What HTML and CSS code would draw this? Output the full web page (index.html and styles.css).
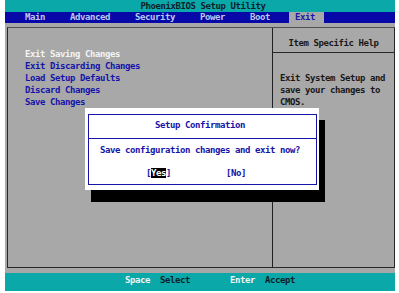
FILE: index.html
```html
<!DOCTYPE html>
<html>
<head>
<meta charset="utf-8">
<link rel="stylesheet" href="styles.css">
</head>
<body>
<div class="screen">
  <div class="titlebar">PhoenixBIOS Setup Utility</div>
  <nav class="menubar">
    <span class="item">Main</span>
    <span class="item">Advanced</span>
    <span class="item">Security</span>
    <span class="item">Power</span>
    <span class="item">Boot</span>
    <span class="item active">Exit</span>
  </nav>
  <div class="main">
    <div class="frame">
      <div class="options">
        <div class="opt sel">Exit Saving Changes</div>
        <div class="opt">Exit Discarding Changes</div>
        <div class="opt">Load Setup Defaults</div>
        <div class="opt">Discard Changes</div>
        <div class="opt">Save Changes</div>
      </div>
      <div class="help">
        <div class="help-title">Item Specific Help</div>
        <div class="help-body">Exit System Setup and<br>save your changes to<br>CMOS.</div>
      </div>
    </div>
  </div>
  <div class="footer">
    <span class="key">Space</span><span class="act">Select</span>
    <span class="key key2">Enter</span><span class="act">Accept</span>
  </div>
  <div class="dialog">
    <div class="dialog-inner">
      <div class="dlg-title">Setup Confirmation</div>
      <div class="dlg-msg">Save configuration changes and exit now?</div>
      <div class="dlg-btns"><span>[<span class="hl">Yes</span>]</span><span>[No]</span></div>
    </div>
  </div>
</div>
</body>
</html>
```

FILE: styles.css
```css
html, body {
  margin: 0;
  padding: 0;
  background: #ffffff;
}
.screen {
  position: relative;
  width: 390px;
  margin-left: 5px;
  font-family: "DejaVu Sans Mono", "Liberation Mono", monospace;
  font-weight: bold;
  font-size: 9px;
  letter-spacing: -0.42px;
  line-height: 12px;
  white-space: nowrap;
}
.titlebar {
  height: 12px;
  background: #0aa8a8;
  color: #102028;
  text-align: center;
  padding-left: 6px;
}
.menubar {
  height: 11px;
  line-height: 11px;
  background: #0808a8;
  display: flex;
  gap: 13px;
  padding-left: 14px;
}
.item {
  padding: 0 6px;
  color: #b8c8f0;
}
.item.active {
  background: #a8a8a8;
  color: #1818a8;
  padding-right: 9px;
}
.main {
  height: 250px;
  box-sizing: border-box;
  background: #a8a8a8;
  padding: 4px 0 0 2px;
}
.frame {
  height: 241px;
  box-sizing: border-box;
  border: 1px solid #282828;
  border-top-color: #505050;
  display: grid;
  grid-template-columns: 265px 1fr;
}
.options {
  border-right: 1px solid #202020;
  padding: 20px 0 0 17px;
}
.opt {
  color: #1414a8;
}
.opt.sel {
  color: #f4f4f4;
}
.help-title {
  height: 25px;
  box-sizing: border-box;
  border-bottom: 1px solid #282828;
  padding-top: 9px;
  text-align: center;
  color: #181818;
}
.help-body {
  padding: 19px 0 0 7px;
  color: #181818;
}
.footer {
  height: 18px;
  box-sizing: border-box;
  background: #0aa8a8;
  padding: 1px 0 0 120px;
  display: flex;
}
.key {
  color: #f4f4f4;
  margin-right: 10px;
}
.key2 {
  margin-left: 40px;
}
.act {
  color: #102028;
}
.dialog {
  position: absolute;
  left: 80px;
  top: 108px;
  width: 234px;
  height: 82px;
  box-sizing: border-box;
  background: #ffffff;
  padding: 6px 2px 5px 3px;
  box-shadow: 6px 12px 0 #000000;
}
.dialog-inner {
  height: 71px;
  box-sizing: border-box;
  border: 1px solid #1414a8;
  color: #1414a8;
}
.dlg-title {
  height: 24px;
  box-sizing: border-box;
  border-bottom: 1px solid #1414a8;
  padding: 4px 0 0 66px;
}
.dlg-msg {
  padding: 5px 0 0 11px;
}
.dlg-btns {
  display: flex;
  gap: 55px;
  padding: 11px 0 0 57px;
}
.hl {
  background: #000000;
  color: #ffffff;
}
```
